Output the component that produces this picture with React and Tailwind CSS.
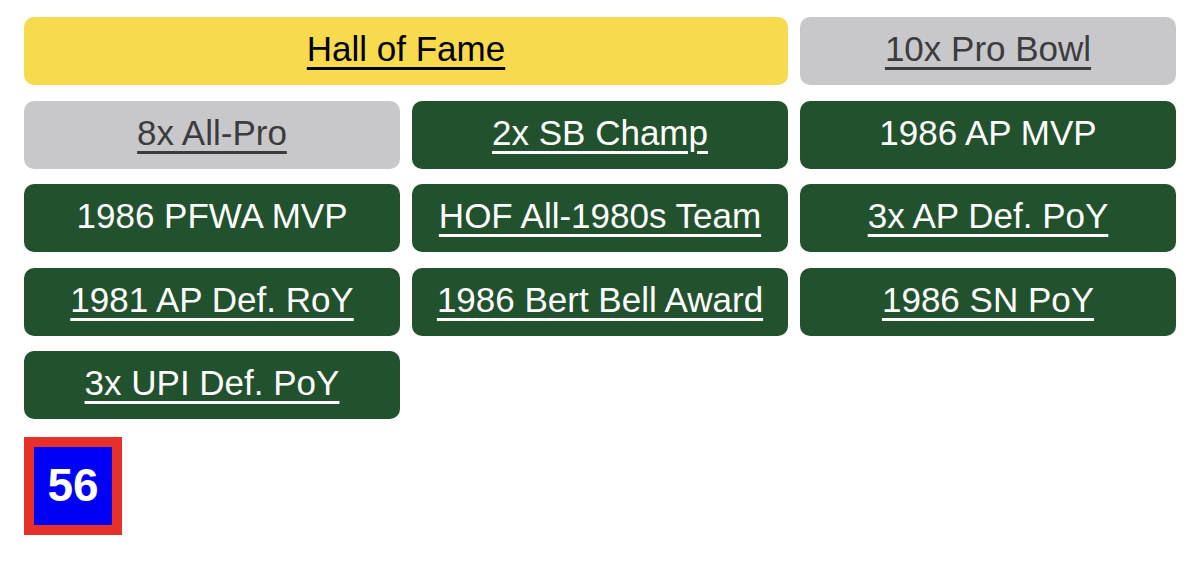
const awards = [
    { label: 'Hall of Fame', tone: 'gold', span: true, link: true },
    { label: '10x Pro Bowl', tone: 'gray', link: true },
    { label: '8x All-Pro', tone: 'gray', link: true },
    { label: '2x SB Champ', tone: 'green', link: true },
    { label: '1986 AP MVP', tone: 'green' },
    { label: '1986 PFWA MVP', tone: 'green' },
    { label: 'HOF All-1980s Team', tone: 'green', link: true },
    { label: '3x AP Def. PoY', tone: 'green', link: true },
    { label: '1981 AP Def. RoY', tone: 'green', link: true },
    { label: '1986 Bert Bell Award', tone: 'green', link: true },
    { label: '1986 SN PoY', tone: 'green', link: true },
    { label: '3x UPI Def. PoY', tone: 'green', link: true },
];

const tones = {
    gold: 'bg-[#f8da4e] text-black',
    gray: 'bg-[#c8c8ca] text-[#3c3c3e]',
    green: 'bg-[#22512e] text-white',
};

export default function App() {
    return (
        <div className="bg-white w-[1200px] h-[568px] px-6 pt-[17px]" style={{ fontFamily: '"Liberation Sans", Arial, sans-serif' }}>
            <div className="grid grid-cols-3 gap-x-3 gap-y-[15.5px]">
                {awards.map(a => (
                    <div key={a.label}
                        className={`h-[68px] rounded-[10px] flex items-center justify-center pb-[5px] text-[35px] leading-none ${tones[a.tone]} ${a.span ? 'col-span-2' : ''}`}>
                        <span className={a.link ? 'underline decoration-[2.5px] underline-offset-[6px]' : ''}>{a.label}</span>
                    </div>
                ))}
            </div>
            <div className="mt-[18px] w-[98px] h-[98px] border-[10px] border-[#e6312a] bg-[#0000f5] flex items-center justify-center pb-[2px]">
                <span className="text-white font-bold text-[46px] leading-none">56</span>
            </div>
        </div>
    );
}
